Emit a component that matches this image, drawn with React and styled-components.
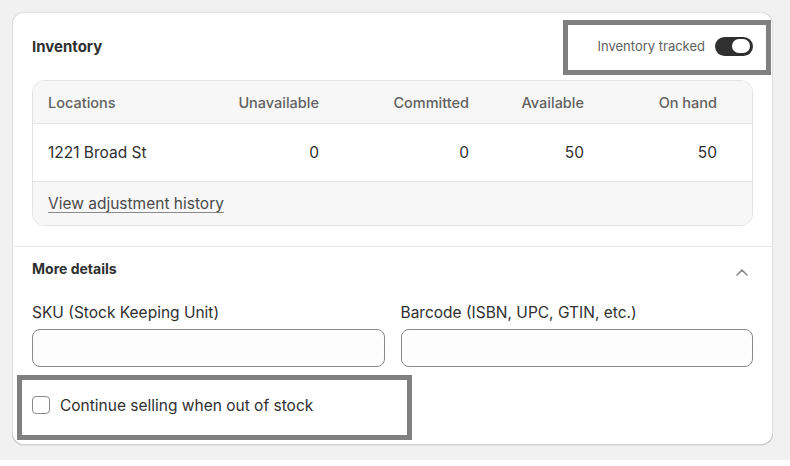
import styled, { createGlobalStyle } from "styled-components"

const GlobalStyle = createGlobalStyle`
  html, body {
    margin: 0;
    background: #ffffff;
  }
  body {
    font-family: Inter, "Noto Sans", "Liberation Sans", sans-serif;
    color: #303030;
    -webkit-font-smoothing: antialiased;
  }
  * {
    box-sizing: border-box;
  }
`

const rows = [
  { location: "1221 Broad St", unavailable: 0, committed: 0, available: 50, onHand: 50 },
]

const App = () => {
  return (
    <Page>
      <GlobalStyle />
      <Card>
        <Section $bottom={20}>
          <HeaderRow>
            <Title>Inventory</Title>
            <Tracked>
              <span>Inventory tracked</span>
              <Switch $on aria-label="Inventory tracked" />
            </Tracked>
          </HeaderRow>

          <Table>
            <TableHead>
              <span>Locations</span>
              <Num>Unavailable</Num>
              <Num>Committed</Num>
              <Num>Available</Num>
              <Num>On hand</Num>
            </TableHead>
            {rows.map((r) => (
              <TableRow key={r.location}>
                <span>{r.location}</span>
                <Num>{r.unavailable}</Num>
                <Num>{r.committed}</Num>
                <Num>{r.available}</Num>
                <Num>{r.onHand}</Num>
              </TableRow>
            ))}
            <TableFoot>
              <HistoryLink href="#">View adjustment history</HistoryLink>
            </TableFoot>
          </Table>
        </Section>

        <Section $top={12} $bottom={30} $divider>
          <DetailsHeader>
            <SubTitle>More details</SubTitle>
            <svg width="20" height="20" viewBox="0 0 20 20" fill="none">
              <path
                d="M4 16L9 11.2L14 16"
                stroke="#8a8a8a"
                strokeWidth="1.6"
                strokeLinecap="round"
                strokeLinejoin="round"
              />
            </svg>
          </DetailsHeader>

          <Fields>
            <Field>
              <Label htmlFor="sku">SKU (Stock Keeping Unit)</Label>
              <Input id="sku" />
            </Field>
            <Field>
              <Label htmlFor="barcode">Barcode (ISBN, UPC, GTIN, etc.)</Label>
              <Input id="barcode" />
            </Field>
          </Fields>

          <CheckRow>
            <Check />
            <span>Continue selling when out of stock</span>
          </CheckRow>
        </Section>

        <Highlight $left={551} $top={8} $width={208} $height={55} />
        <Highlight $left={5} $top={363} $width={395} $height={65} />
      </Card>
    </Page>
  )
}

export default App

const Page = styled.div`
  min-height: 458px;
  background: #f1f1f1;
  padding: 12px 17px 15px 12px;
`

const Card = styled.div`
  position: relative;
  width: 761px;
  background: #ffffff;
  border-radius: 12px;
  box-shadow: 0 1px 0 0 rgba(26, 26, 26, 0.07), 0 1px 0 0 rgba(204, 204, 204, 0.5) inset,
    0 -1px 0 0 rgba(0, 0, 0, 0.17) inset, -1px 0 0 0 rgba(0, 0, 0, 0.13) inset,
    1px 0 0 0 rgba(0, 0, 0, 0.13) inset;
`

const Section = styled.div`
  padding: ${(p) => p.$top || 20}px 20px ${(p) => p.$bottom || 20}px;
  border-top: ${(p) => (p.$divider ? "1px solid #ebebeb" : "none")};
`

const HeaderRow = styled.div`
  display: flex;
  align-items: center;
  justify-content: space-between;
  height: 28px;
  margin-bottom: 20px;
`

const Title = styled.h2`
  margin: 1px 0 0;
  font-size: 15px;
  font-weight: 650;
  line-height: 20px;
  color: #303030;
`

const Tracked = styled.div`
  display: flex;
  align-items: center;
  gap: 10px;
  font-size: 13px;
  line-height: 20px;
  color: #616161;
`

const Switch = styled.button`
  position: relative;
  width: 38px;
  height: 19px;
  padding: 0;
  border: none;
  border-radius: 10px;
  background: ${(p) => (p.$on ? "#303030" : "#cccccc")};
  cursor: pointer;

  &::after {
    content: "";
    position: absolute;
    top: 2.5px;
    ${(p) => (p.$on ? "right: 3px;" : "left: 3px;")}
    width: 18px;
    height: 14px;
    border-radius: 7px;
    background: #ffffff;
  }
`

const Table = styled.div`
  border: 1px solid #e3e3e3;
  border-radius: 12px;
  overflow: hidden;
`

const gridRow = `
  display: grid;
  grid-template-columns: 160px 111px 150px 115px 133px;
  align-items: center;
  padding-left: 15px;
`

const TableHead = styled.div`
  ${gridRow}
  height: 43px;
  background: #f7f7f7;
  border-bottom: 1px solid #e3e3e3;
  font-size: 14.5px;
  font-weight: 550;
  color: #616161;
`

const TableRow = styled.div`
  ${gridRow}
  height: 58px;
  border-bottom: 1px solid #e3e3e3;
  font-size: 15.5px;
  color: #303030;
`

const Num = styled.span`
  text-align: right;
`

const TableFoot = styled.div`
  display: flex;
  align-items: center;
  height: 43px;
  padding-left: 15px;
  background: #f7f7f7;
`

const HistoryLink = styled.a`
  font-size: 15.5px;
  color: #4a4a4a;
  text-decoration: underline;
  text-underline-offset: 3px;
  text-decoration-color: #8a8a8a;
`

const DetailsHeader = styled.div`
  display: flex;
  align-items: center;
  justify-content: space-between;
  height: 20px;
  margin-bottom: 24px;
`

const SubTitle = styled.h3`
  margin: 0;
  font-size: 14px;
  font-weight: 650;
  line-height: 20px;
  color: #303030;
`

const Fields = styled.div`
  display: grid;
  grid-template-columns: 1fr 1fr;
  gap: 16px;
  margin-bottom: 28px;
`

const Field = styled.div`
  display: flex;
  flex-direction: column;
  gap: 6px;
`

const Label = styled.label`
  font-size: 15.5px;
  line-height: 20px;
  color: #303030;
`

const Input = styled.input`
  height: 38px;
  width: 100%;
  border: 1px solid #8a8a8a;
  border-radius: 8px;
  background: #fdfdfd;
  padding: 0 12px;
  font: inherit;
  font-size: 14px;
`

const CheckRow = styled.label`
  display: flex;
  align-items: center;
  gap: 10px;
  height: 20px;
  font-size: 15.5px;
  color: #303030;
`

const Check = styled.span`
  width: 18px;
  height: 18px;
  border: 1px solid #8a8a8a;
  border-radius: 4px;
  background: #ffffff;
`

const Highlight = styled.div`
  position: absolute;
  left: ${(p) => p.$left}px;
  top: ${(p) => p.$top}px;
  width: ${(p) => p.$width}px;
  height: ${(p) => p.$height}px;
  border: 5px solid #808080;
  pointer-events: none;
`
